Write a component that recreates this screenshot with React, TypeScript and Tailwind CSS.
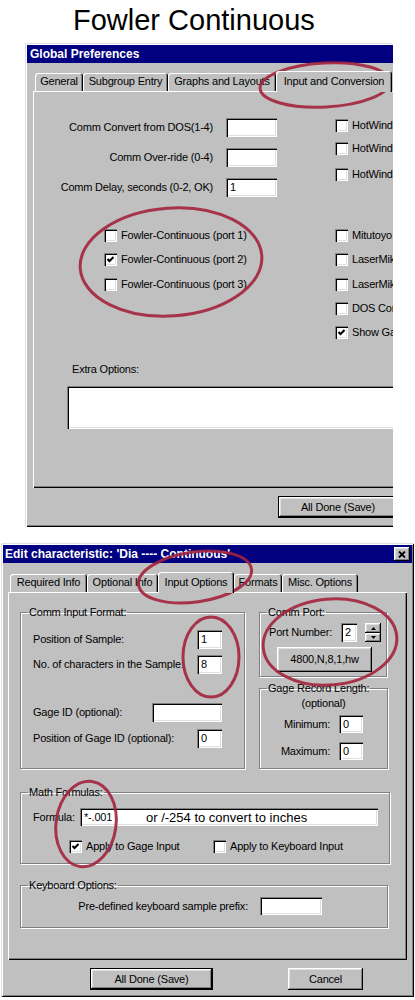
import type { ReactNode } from "react";

// win95 bevels
const sunken =
  "bg-white shadow-[inset_1px_1px_0_#808080,inset_2px_2px_0_#000,inset_-1px_-1px_0_#fff,inset_-2px_-2px_0_#dfdfdf]";
const raised =
  "bg-[#c0c0c0] shadow-[inset_-1px_-1px_0_#000,inset_1px_1px_0_#fff,inset_-2px_-2px_0_#808080,inset_2px_2px_0_#dfdfdf]";
const etched = "border border-[#808080] shadow-[inset_1px_1px_0_#fff,1px_1px_0_#fff]";

function Field({ className = "", children }: { className?: string; children?: ReactNode }) {
  return (
    <div className={`${sunken} flex shrink-0 items-center overflow-hidden whitespace-nowrap pl-[4px] ${className}`}>
      {children}
    </div>
  );
}

function Check({ on }: { on?: boolean }) {
  return (
    <span className={`${sunken} flex h-[13px] w-[13px] shrink-0 items-center justify-center`}>
      {on && (
        <svg width="7" height="7" viewBox="0 0 7 7">
          <path d="M0.5 3 L2.5 5 L6.5 1" stroke="#000" strokeWidth="2" fill="none" />
        </svg>
      )}
    </span>
  );
}

function CheckRow({ label, on, className = "" }: { label: string; on?: boolean; className?: string }) {
  return (
    <div className={`flex h-[13px] items-center gap-[4px] whitespace-nowrap ${className}`}>
      <Check on={on} />
      <span>{label}</span>
    </div>
  );
}

function Tab({ label, className, active }: { label: string; className: string; active?: boolean }) {
  return (
    <div
      className={`${className} flex shrink-0 justify-center whitespace-nowrap rounded-t-[3px] bg-[#c0c0c0] shadow-[inset_1px_1px_0_#fff,inset_-1px_0_0_#000,inset_-2px_0_0_#808080] ${
        active ? "relative z-10 -mb-px h-[21px] pt-[4px]" : "h-[18px] pt-[2px]"
      }`}
    >
      {label}
    </div>
  );
}

function Group({ title, className, children }: { title: string; className: string; children?: ReactNode }) {
  return (
    <fieldset className={`${etched} ${className}`}>
      <legend className="ml-[7px] px-[1px]">{title}</legend>
      {children}
    </fieldset>
  );
}

function FormRow({ label, value }: { label: string; value?: string }) {
  return (
    <div className="flex h-[19px] items-center">
      <span className="w-[180px] text-right">{label}</span>
      <Field className="ml-[13px] h-[19px] w-[51px]">{value}</Field>
    </div>
  );
}

function GlobalPreferences() {
  return (
    <div className="ml-[25px] w-[368px] overflow-hidden bg-[#c0c0c0] pl-[2px] pt-[2px] shadow-[inset_1px_1px_0_#dfdfdf,inset_2px_2px_0_#fff,inset_0_-1px_0_#000,inset_0_-2px_0_#808080]">
      <div className="h-[18px] bg-[#000080] pl-[3px] text-[12px] font-bold leading-[18px] tracking-normal text-white">
        Global Preferences
      </div>

      <div className="ml-[6px] mt-[8px] flex h-[20px] items-end pl-[2px]">
        <Tab label="General" className="w-[48px]" />
        <Tab label="Subgroup Entry" className="w-[85px]" />
        <Tab label="Graphs and Layouts" className="w-[108px]" />
        <Tab label="Input and Conversion" className="w-[116px]" active />
      </div>

      <div className="ml-[6px] h-[397px] w-[372px] shadow-[inset_1px_1px_0_#fff,inset_0_-1px_0_#000,inset_0_-2px_0_#808080]">
        <div className="flex">
          <div className="w-[302px] shrink-0 pt-[27px]">
            <FormRow label="Comm Convert from DOS(1-4)" />
            <div className="mt-[11px]">
              <FormRow label="Comm Over-ride (0-4)" />
            </div>
            <div className="mt-[11px]">
              <FormRow label="Comm Delay, seconds (0-2, OK)" value="1" />
            </div>
            <CheckRow label="Fowler-Continuous (port 1)" className="ml-[71px] mt-[32px]" />
            <CheckRow label="Fowler-Continuous (port 2)" on className="ml-[71px] mt-[11px]" />
            <CheckRow label="Fowler-Continuous (port 3)" className="ml-[71px] mt-[12px]" />
          </div>
          {/* the screenshot is cut at the right edge */}
          <div className="pt-[28px]">
            <CheckRow label="HotWind" />
            <CheckRow label="HotWind" className="mt-[10px]" />
            <CheckRow label="HotWind" className="mt-[13px]" />
            <CheckRow label="Mitutoyo" className="mt-[48px]" />
            <CheckRow label="LaserMik" className="mt-[11px]" />
            <CheckRow label="LaserMik" className="mt-[12px]" />
            <CheckRow label="DOS Cor" className="mt-[11px]" />
            <CheckRow label="Show Ga" on className="mt-[11px]" />
          </div>
        </div>

        {/* Extra Options */}
        <div className="ml-[39px] mt-[24px]">Extra Options:</div>
        <Field className="ml-[34px] mt-[10px] h-[43px] w-[340px]" />
      </div>

      <div className="h-[39px] pl-[251px] pt-[8px]">
        <button type="button" className={`${raised} h-[22px] w-[120px] border border-black`}>
          All Done (Save)
        </button>
      </div>
    </div>
  );
}

function Spinner() {
  return (
    <div className="ml-[8px] flex h-[19px] w-[16px] flex-col">
      <div className={`${raised} flex h-[10px] items-center justify-center`}>
        <svg width="5" height="3" viewBox="0 0 5 3">
          <path d="M2.5 0 L5 3 L0 3 Z" fill="#000" />
        </svg>
      </div>
      <div className={`${raised} flex h-[9px] items-center justify-center`}>
        <svg width="5" height="3" viewBox="0 0 5 3">
          <path d="M0 0 L5 0 L2.5 3 Z" fill="#000" />
        </svg>
      </div>
    </div>
  );
}

function EditCharacteristic() {
  return (
    <div className="ml-[1px] mt-[16px] w-[413px] bg-[#c0c0c0] p-[2px] shadow-[inset_1px_1px_0_#dfdfdf,inset_-1px_-1px_0_#000,inset_2px_2px_0_#fff,inset_-2px_-2px_0_#808080]">
      <div className="flex h-[18px] items-center justify-between bg-[#000080] pl-[2px] pr-[2px] text-[12px] font-bold tracking-normal text-white">
        <span>Edit characteristic: 'Dia ---- Continuous'</span>
        <button type="button" className={`${raised} flex h-[14px] w-[16px] items-center justify-center`}>
          <svg width="8" height="7" viewBox="0 0 8 7">
            <path d="M1 0.5 L7 6.5 M7 0.5 L1 6.5" stroke="#000" strokeWidth="1.8" />
          </svg>
        </button>
      </div>

      <div className="ml-[7px] mt-[9px] flex h-[20px] items-end">
        <Tab label="Required Info" className="w-[77px]" />
        <Tab label="Optional Info" className="w-[71px]" />
        <Tab label="Input Options" className="w-[76px]" active />
        <Tab label="Formats" className="w-[48px]" />
        <Tab label="Misc. Options" className="w-[76px]" />
      </div>

      <div className="ml-[5px] h-[368px] w-[399px] pl-[12px] pt-[14px] shadow-[inset_1px_1px_0_#fff,inset_-1px_-1px_0_#000,inset_-2px_-2px_0_#808080]">
        <div className="flex gap-[14px]">
          <Group title="Comm Input Format:" className="h-[163px] w-[225px]">
            <div className="pl-[12px] pr-[22px]">
              <div className="mt-[11px] flex h-[19px] items-center justify-between">
                <span>Position of Sample:</span>
                <Field className="h-[19px] w-[25px]">1</Field>
              </div>
              <div className="mt-[6px] flex h-[19px] items-center justify-between">
                <span>No. of characters in the Sample:</span>
                <Field className="h-[19px] w-[25px]">8</Field>
              </div>
              <div className="mt-[29px] flex h-[19px] items-center justify-between">
                <span>Gage ID (optional):</span>
                <Field className="h-[19px] w-[70px]" />
              </div>
              <div className="mt-[7px] flex h-[19px] items-center justify-between">
                <span>Position of Gage ID (optional):</span>
                <Field className="h-[19px] w-[25px]">0</Field>
              </div>
            </div>
          </Group>

          <div className="w-[129px]">
            <Group title="Comm Port:" className="h-[71px] w-[128px]">
              <div className="mt-[4px] flex h-[19px] items-center pl-[9px]">
                <span className="w-[72px]">Port Number:</span>
                <Field className="h-[19px] w-[16px] pl-[3px]">2</Field>
                <Spinner />
              </div>
              <button type="button" className={`${raised} ml-[17px] mt-[5px] h-[25px] w-[95px]`}>
                4800,N,8,1,hw
              </button>
            </Group>
            <Group title="Gage Record Length:" className="mt-[5px] h-[87px] w-[129px]">
              <div className="mt-[2px] text-center">(optional)</div>
              <div className="mt-[5px] flex h-[18px] items-center justify-end pr-[24px]">
                <span>Minimum:</span>
                <Field className="ml-[9px] h-[18px] w-[24px]">0</Field>
              </div>
              <div className="mt-[9px] flex h-[18px] items-center justify-end pr-[24px]">
                <span>Maximum:</span>
                <Field className="ml-[9px] h-[18px] w-[24px]">0</Field>
              </div>
            </Group>
          </div>
        </div>

        <Group title="Math Formulas:" className="mt-[17px] h-[78px] w-[370px]">
          <div className="mt-[9px] flex h-[18px] items-center pl-[12px]">
            <span className="w-[47px]">Formula:</span>
            <Field className="h-[18px] w-[298px]">
              <span className="w-[62px]">*-.001</span>
              <span className="text-[13px] tracking-normal">or /-254 to convert to inches</span>
            </Field>
          </div>
          <div className="mt-[14px] flex items-center pl-[48px]">
            <CheckRow label="Apply to Gage Input" on className="w-[144px]" />
            <CheckRow label="Apply to Keyboard Input" />
          </div>
        </Group>

        <Group title="Keyboard Options:" className="mt-[15px] h-[49px] w-[368px]">
          <div className="mt-[5px] flex h-[18px] items-center">
            <span className="w-[227px] text-right">Pre-defined keyboard sample prefix:</span>
            <Field className="ml-[12px] h-[18px] w-[62px]" />
          </div>
        </Group>
      </div>

      <div className="flex pb-[5px] pt-[8px]">
        <button type="button" className={`${raised} ml-[87px] h-[22px] w-[123px] border border-black`}>
          All Done (Save)
        </button>
        <button type="button" className={`${raised} ml-[75px] h-[22px] w-[75px]`}>
          Cancel
        </button>
      </div>
    </div>
  );
}

// hand drawn red circles on top of the screenshots
function Marks() {
  const rings = [
    { cx: 325, cy: 85, rx: 65, ry: 22, r: -3 },
    { cx: 171, cy: 262, rx: 91, ry: 54, r: -4 },
    { cx: 195, cy: 577, rx: 57, ry: 25, r: -8 },
    { cx: 211, cy: 657, rx: 28, ry: 40, r: 0 },
    { cx: 330, cy: 642, rx: 67, ry: 43, r: -5 },
    { cx: 86, cy: 824, rx: 30, ry: 43, r: 8 },
  ];
  return (
    <svg className="pointer-events-none absolute left-0 top-0" width="415" height="1000">
      {rings.map((e, i) => (
        <ellipse
          key={i}
          cx={e.cx}
          cy={e.cy}
          rx={e.rx}
          ry={e.ry}
          transform={`rotate(${e.r} ${e.cx} ${e.cy})`}
          fill="none"
          stroke="#a3233d"
          strokeWidth="3"
          opacity="0.9"
        />
      ))}
    </svg>
  );
}

export default function App() {
  return (
    <div className="relative h-[1000px] w-[415px] overflow-hidden bg-white font-['Liberation_Sans',Arial,sans-serif] text-[11px] leading-[13px] tracking-[-0.2px] text-black">
      <h1 className="h-[43px] pl-[73px] pt-[4px] text-[29px] font-normal leading-[33px] tracking-normal">
        Fowler Continuous
      </h1>
      <GlobalPreferences />
      <EditCharacteristic />
      <Marks />
    </div>
  );
}
